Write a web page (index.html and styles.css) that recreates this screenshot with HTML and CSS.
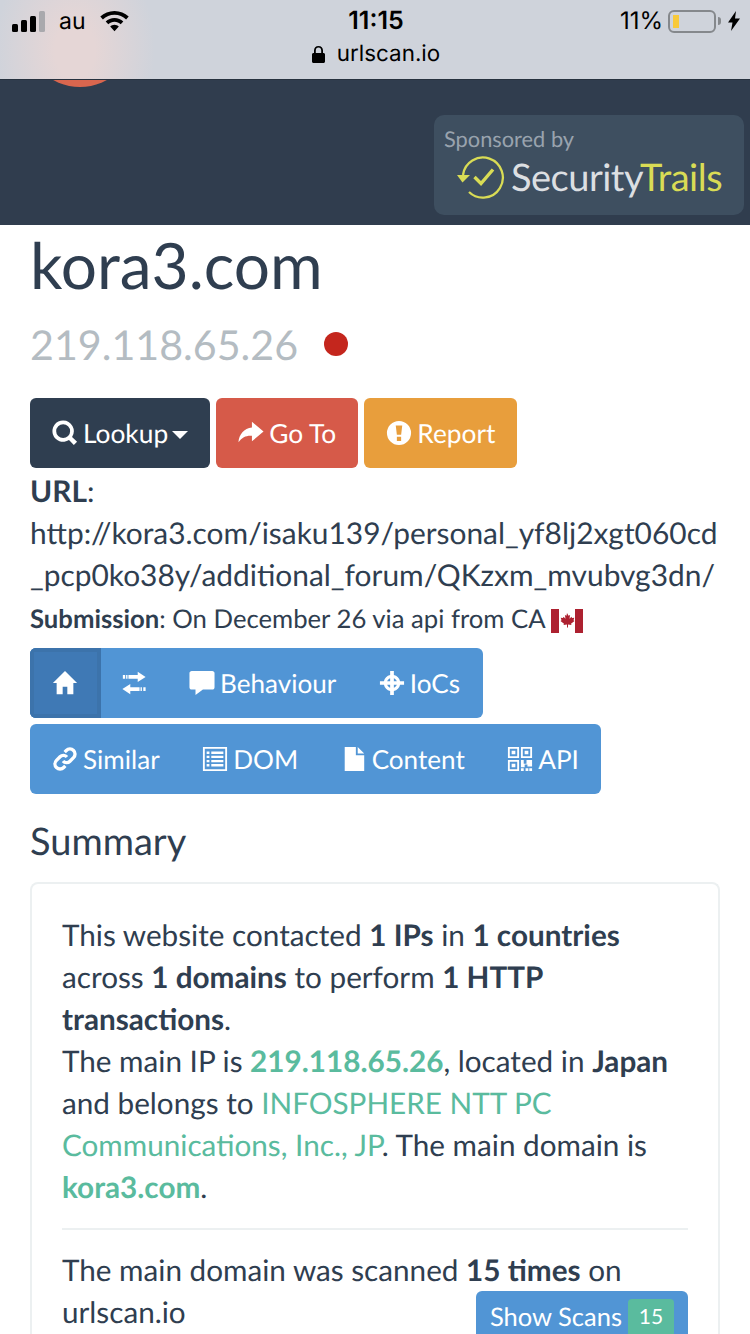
FILE: index.html
```html
<!DOCTYPE html>
<html lang="en">
  <head>
    <meta charset="UTF-8" />
    <meta name="viewport" content="width=device-width, initial-scale=1.0" />
    <title>kora3.com - urlscan.io</title>
    <link rel="stylesheet" href="styles.css">
  </head>
  <body>
    <!-- Phone status bar -->
    <div class="status-bar">
      <div class="status-row">
        <div class="status-left">
          <svg class="signal" width="34" height="21" viewBox="0 0 34 21" aria-hidden="true">
            <rect x="0" y="13" width="6" height="8" rx="1.500" fill="#000" />
            <rect x="9" y="9" width="6" height="12" rx="1.500" fill="#000" />
            <rect x="18" y="5" width="6" height="16" rx="1.500" fill="#000" />
            <rect x="27" y="0" width="6" height="21" rx="1.500" fill="#a9a9ad" />
          </svg>
          <span class="carrier">au</span>
          <svg class="wifi" width="29" height="21" viewBox="0 0 29 21" aria-hidden="true">
            <path d="M14.500 0C9 0 4 2.100.3 5.600l2.600 2.800C5.900 5.500 10 3.800 14.500 3.800S23.100 5.500 26.100 8.400l2.600-2.800C25 2.100 20 0 14.500 0z" fill="#000" />
            <path d="M14.500 6.900c-3.400 0-6.500 1.300-8.800 3.500l2.600 2.800c1.600-1.500 3.800-2.500 6.200-2.500s4.600 1 6.200 2.500l2.600-2.800c-2.300-2.200-5.400-3.500-8.800-3.500z" fill="#000" />
            <path d="M14.500 13.800c-1.700 0-3.200.7-4.300 1.700l4.300 4.700 4.300-4.700c-1.100-1-2.600-1.700-4.300-1.700z" fill="#000" />
          </svg>
        </div>
        <div class="status-time">11:15</div>
        <div class="status-right">
          <span class="percent">11%</span>
          <span class="battery"><span class="battery-level"></span></span>
          <span class="battery-tip"></span>
          <svg width="12" height="20" viewBox="0 0 12 20" aria-hidden="true">
            <path d="M8 0L0 11.500h4.500L3 20l9-12.500H7z" fill="#000" />
          </svg>
        </div>
      </div>
      <div class="address">
        <svg width="13" height="17" viewBox="0 0 13 17" aria-hidden="true">
          <path d="M6.500 0C3.700 0 2 2 2 4.500V7H1.500C.7 7 0 7.700 0 8.500v7C0 16.300.7 17 1.500 17h10c.8 0 1.500-.7 1.500-1.500v-7C13 7.700 12.300 7 11.500 7H11V4.500C11 2 9.300 0 6.500 0zM3.800 7V4.500c0-1.700 1-2.900 2.700-2.900s2.700 1.200 2.700 2.900V7z" fill="#000" />
        </svg>
        <span>urlscan.io</span>
      </div>
    </div>

    <!-- Site header -->
    <header class="site-header">
      <span class="brand-dot"></span>
      <a class="sponsor">
        <small>Sponsored by</small>
        <span class="sponsor-logo">
          <svg width="48" height="44" viewBox="0 0 48 44" aria-hidden="true">
            <path d="M6 20A20 20 0 1 1 12 37" fill="none" stroke="#d9dc55" stroke-width="2.300" />
            <path d="M0 20h13l-7.500 7.500z" fill="#d9dc55" />
            <path d="M17.500 22l6.500 6.500L36 14.500" fill="none" stroke="#d9dc55" stroke-width="3.400" />
          </svg>
          <span class="logo-text">Security<b>Trails</b></span>
        </span>
      </a>
    </header>

    <main class="content">
      <h1>kora3.com</h1>
      <h2 class="ip-line">219.118.65.26<span class="status-dot"></span></h2>

      <div class="actions">
        <a class="btn btn-dark">
          <svg class="icon" viewBox="0 0 28 28" aria-hidden="true">
            <path fill-rule="evenodd" d="M12 .5a11.500 11.500 0 1 0 6.300 21.100l5.200 5.400 3.500-3.500-5.400-5.300A11.500 11.500 0 0 0 12 .5zm0 4a7.500 7.500 0 1 1 0 15 7.500 7.500 0 0 1 0-15z" />
          </svg>
          Lookup
          <span class="caret"></span>
        </a>
        <a class="btn btn-red">
          <svg class="icon" viewBox="0 0 28 28" aria-hidden="true">
            <path d="M15 2l12.500 10.500L15 23v-6c-6-.5-10.500 1.500-14.500 7C1 15.500 6.500 9 15 8z" />
          </svg>
          Go To
        </a>
        <a class="btn btn-orange">
          <svg class="icon" viewBox="0 0 28 28" aria-hidden="true">
            <path fill-rule="evenodd" d="M14 1a13 13 0 1 0 0 26 13 13 0 0 0 0-26zM10.500 6h7l-1.200 10h-4.600zM11.700 18h4.600v4.500h-4.600z" />
          </svg>
          Report
        </a>
      </div>

      <div class="url-block">
        <strong>URL</strong>:<br />
        http://kora3.com/isaku139/personal_yf8lj2xgt060cd<br />
        _pcp0ko38y/additional_forum/QKzxm_mvubvg3dn/
      </div>
      <div class="submission">
        <strong>Submission</strong>: On December 26 via api from CA
        <svg class="flag" width="32" height="24" viewBox="0 0 32 24" aria-label="Canada">
          <rect width="32" height="24" fill="#fff" />
          <rect width="8" height="24" fill="#ad2130" />
          <rect x="24" width="8" height="24" fill="#ad2130" />
          <path d="M16 4l1.500 2.800 1.600-.8-.6 3.700 2-2 .5 1.400 2.300-.4-.8 2.600 1 .6-3.500 2.800.5 1.400-3.500-.5V18.500h-1V15.600l-3.500.5.500-1.400-3.500-2.800 1-.6-.8-2.600 2.300.4.500-1.400 2 2-.6-3.700 1.600.8z" fill="#ad2130" />
        </svg>
      </div>

      <nav class="tab-group">
        <a class="tab active">
          <svg class="icon" viewBox="0 0 28 28" aria-hidden="true">
            <path d="M14 1L1 14h4v12h6.500v-8h5v8H23V14h4z" />
          </svg>
        </a>
        <a class="tab">
          <svg class="icon" viewBox="0 0 28 28" aria-hidden="true">
            <path d="M18 2l8.500 5.500L18 13V9.500H8v-4h10zM2 5.500h2.500v4H2zM5.500 5.500H7v4H5.500zM10 15l-8.500 5.500L10 26v-3.500h10v-4H10zM21 18.500h1.500v4H21zM24 18.500h2.500v4H24z" />
          </svg>
        </a>
        <a class="tab">
          <svg class="icon" viewBox="0 0 28 28" aria-hidden="true">
            <path d="M3 1h22c1.500 0 2.500 1 2.500 2.500v15c0 1.500-1 2.500-2.500 2.500H15l-8 6v-6H3c-1.500 0-2.500-1-2.500-2.500v-15C.5 2 1.500 1 3 1z" />
          </svg>
          Behaviour
        </a>
        <a class="tab">
          <svg class="icon" viewBox="0 0 28 28" aria-hidden="true">
            <path fill-rule="evenodd" d="M12 1h4v4.300c3.400.7 6 3.300 6.700 6.700H27v4h-4.300c-.7 3.400-3.300 6-6.700 6.700V27h-4v-4.300C8.600 22 6 19.400 5.300 16H1v-4h4.300C6 8.600 8.600 6 12 5.300zM12 8.800C10.500 9.400 9.400 10.500 8.800 12H12zM16 8.800V12h3.200c-.6-1.500-1.700-2.600-3.200-3.200zM8.800 16c.6 1.500 1.700 2.600 3.200 3.200V16zM16 16v3.200c1.500-.6 2.600-1.700 3.200-3.200z" />
          </svg>
          IoCs
        </a>
      </nav>
      <nav class="tab-group">
        <a class="tab">
          <svg class="icon" viewBox="0 0 28 28" aria-hidden="true">
            <g fill="none" stroke="#fff" stroke-width="3.600" transform="rotate(-45 14 14)">
              <path d="M17 14a5 5 0 0 0-5-5.500H6.500a5.500 5.500 0 0 0 0 11H9" />
              <path d="M11 14a5 5 0 0 0 5 5.500h5.500a5.500 5.500 0 0 0 0-11H19" />
            </g>
          </svg>
          Similar
        </a>
        <a class="tab">
          <svg class="icon" viewBox="0 0 28 28" aria-hidden="true">
            <path fill-rule="evenodd" d="M1 1h26v26H1zM3 3v22h22V3zM5 6h3v2.500H5zM10 6h13v2.500H10zM5 10.500h3V13H5zM10 10.500h13V13H10zM5 15h3v2.500H5zM10 15h13v2.500H10zM5 19.500h3V22H5zM10 19.500h13V22H10z" />
          </svg>
          DOM
        </a>
        <a class="tab">
          <svg class="icon" viewBox="0 0 28 28" aria-hidden="true">
            <path d="M4 1h12v9h9v17H4zM18 1l7 7h-7z" />
          </svg>
          Content
        </a>
        <a class="tab">
          <svg class="icon" viewBox="0 0 28 28" aria-hidden="true">
            <path fill-rule="evenodd" d="M1 1h12v12H1zM3 3v8h8V3zM5 5h4v4H5zM15 1h12v12H15zM17 3v8h8V3zM19 5h4v4h-4zM1 15h12v12H1zM3 17v8h8v-8zM5 19h4v4H5zM15 15h3v4h3v-4h6v7h-5v-2h-3v3h-4zM15 24h3v3h-3zM20 24h3v3h-3zM24 24h3v3h-3z" />
          </svg>
          API
        </a>
      </nav>

      <h3 class="section-title">Summary</h3>
      <section class="panel">
        <p>
          This website contacted <strong>1 IPs</strong> in <strong>1 countries</strong>
          across <strong>1 domains</strong> to perform <strong>1 HTTP transactions</strong>.<br />
          The main IP is <a class="link"><strong>219.118.65.26</strong></a>, located in <strong>Japan</strong>
          and belongs to <a class="link">INFOSPHERE NTT PC Communications, Inc., JP</a>. The main domain is
          <a class="link"><strong>kora3.com</strong></a>.
        </p>
        <hr class="line" />
        <div class="scan-row">
          <p>The main domain was scanned <strong>15 times</strong> on urlscan.io</p>
          <a class="btn-scans">Show Scans <span class="badge">15</span></a>
        </div>
      </section>
    </main>
  </body>
</html>
```

FILE: styles.css
```css
* {
  margin: 0;
  padding: 0;
  box-sizing: border-box;
}
:root {
  --navy: #2f3e50;
  --blue: #5195d5;
  --green: #5abb9e;
}
html,
body {
  height: 1334px;
  overflow: hidden;
}
body {
  position: relative;
  background-color: #fff;
  color: var(--navy);
  font-family: Lato, "Open Sans", sans-serif;
  font-size: 29.900px;
  line-height: 42px;
  text-rendering: geometricPrecision;
}

/*
  Status bar
*/

.status-bar {
  position: relative;
  z-index: 2;
  height: 80px;
  padding: 9px 10px 0 12px;
  color: #000;
  font-family: Inter, sans-serif;
  background-color: #cfd3db;
  background-image: radial-gradient(ellipse 80px 110px at 75px 50px, #e5d6d6 25%, rgba(229, 214, 214, 0) 100%);
  border-bottom: 1px solid #27323f;
}
.status-row {
  display: grid;
  grid-template-columns: 1fr auto 1fr;
  align-items: center;
  height: 24px;
}
.status-left,
.status-right {
  display: flex;
  align-items: center;
}
.status-left .carrier {
  margin: 0 14px 0 13px;
  font-size: 23px;
  line-height: 24px;
}
.status-time {
  font-size: 25px;
  font-weight: 600;
  line-height: 24px;
}
.status-right {
  justify-content: flex-end;
  font-size: 24px;
  line-height: 24px;
}
.percent {
  margin-right: 5px;
}
.battery {
  display: block;
  width: 48px;
  height: 23px;
  padding: 3px;
  border: 2px solid #85888c;
  border-radius: 6px;
}
.battery-level {
  display: block;
  width: 6px;
  height: 13px;
  background-color: #f8c93a;
}
.battery-tip {
  width: 3px;
  height: 8px;
  margin: 0 7px 0 2px;
  background-color: #85888c;
  border-radius: 0 3px 3px 0;
}
.address {
  display: flex;
  align-items: center;
  justify-content: center;
  gap: 12px;
  height: 30px;
  margin-top: 6px;
  font-size: 22.400px;
  line-height: 30px;
}

/*
  Site header
*/

.site-header {
  display: flex;
  justify-content: flex-end;
  height: 145px;
  padding: 35px 6px 10px 0;
  background-color: #303d4e;
}
.brand-dot {
  position: absolute;
  z-index: 1;
  top: -25px;
  left: 24px;
  width: 112px;
  height: 112px;
  border-radius: 50%;
  background-color: #d9664e;
}
.sponsor {
  display: block;
  width: 310px;
  height: 100px;
  padding: 10px 10px 0;
  border-radius: 10px;
  background-color: #3e4f60;
}
.sponsor small {
  display: block;
  color: #99a3ae;
  font-size: 21.800px;
  line-height: 28px;
}
.sponsor-logo {
  display: flex;
  align-items: center;
  gap: 6px;
  margin: 2px 0 0 13px;
}
.logo-text {
  color: #dcdfe2;
  font-size: 38px;
  line-height: 44px;
  letter-spacing: -0.5px;
}
.logo-text b {
  color: #d9dc55;
  font-weight: 400;
}

/*
  Content
*/

.content {
  padding: 0 30px;
}
h1 {
  height: 80px;
  font-size: 64px;
  font-weight: 400;
  line-height: 80px;
}
.ip-line {
  display: flex;
  align-items: center;
  gap: 26px;
  height: 78px;
  margin-bottom: 15px;
  color: #b4bcc2;
  font-size: 41.200px;
  font-weight: 400;
}
.status-dot {
  width: 24px;
  height: 24px;
  border-radius: 50%;
  background-color: #c4261d;
}
.actions {
  display: flex;
  gap: 6px;
  margin-bottom: 2px;
}
.btn,
.tab {
  display: flex;
  align-items: center;
  gap: 5px;
  height: 70px;
  color: #fff;
  white-space: nowrap;
}
.btn {
  padding: 0 22px;
  font-size: 26.300px;
  border-radius: 6px;
}
.btn-dark {
  background-color: var(--navy);
}
.btn-red {
  background-color: #d65a49;
}
.btn-orange {
  background-color: #e89e3c;
}
.icon {
  flex: none;
  width: 26px;
  height: 26px;
  fill: #fff;
}
.caret {
  width: 0;
  height: 0;
  margin: 4px 0 0 -1px;
  border-top: 8px solid #fff;
  border-right: 8px solid transparent;
  border-left: 8px solid transparent;
}
.submission {
  height: 44px;
  margin: 1px 0 7px;
  font-size: 25.700px;
  line-height: 44px;
}
.flag {
  vertical-align: -5px;
}
.tab-group {
  display: flex;
  width: max-content;
  margin-bottom: 6px;
  border-radius: 6px;
  overflow: hidden;
  background-color: var(--blue);
}
.tab {
  padding: 0 22.500px 0 22px;
  font-size: 26.100px;
}
.tab + .tab {
  margin-left: -2px;
}
.tab.active {
  background-color: #3f79b5;
  box-shadow: inset 0 0 0 4px #3c73ab;
}
.section-title {
  height: 70px;
  margin-top: 18px;
  font-size: 38px;
  font-weight: 400;
  line-height: 58px;
}
.panel {
  height: 452px;
  padding: 31px 30px 0;
  font-size: 29.700px;
  border: 2px solid #ecf0f1;
  border-bottom: 0;
  border-radius: 8px 8px 0 0;
}
.link {
  color: var(--green);
}
.line {
  margin: 19px 0 20px;
  border: 0;
  border-top: 2px solid #ecf0f1;
}
.scan-row {
  position: relative;
}
.btn-scans {
  position: absolute;
  top: 41px;
  right: 0;
  display: flex;
  align-items: center;
  gap: 6px;
  height: 52px;
  padding: 0 14px;
  color: #fff;
  font-size: 25.500px;
  border-radius: 6px 6px 0 0;
  background-color: var(--blue);
}
.badge {
  width: 46px;
  height: 36px;
  font-size: 21px;
  line-height: 36px;
  text-align: center;
  border-radius: 4px 4px 0 0;
  background-color: var(--green);
}
```
